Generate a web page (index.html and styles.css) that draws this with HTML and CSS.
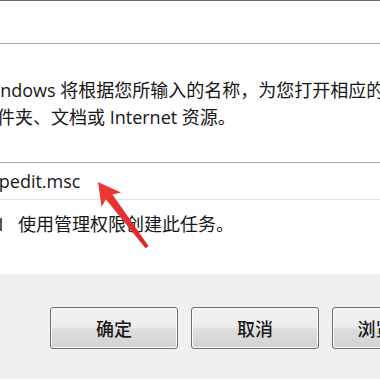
FILE: index.html
```html
<!DOCTYPE html>
<html lang="zh-CN">
<head>
<meta charset="utf-8">
<title>运行</title>
<link rel="stylesheet" href="styles.css">
</head>
<body>
<div class="page">
  <div class="topbar"></div>
  <div class="content">
    <div class="desc">
      <div class="line">Windows 将根据您所输入的名称，为您打开相应的程序、</div>
      <div class="line">文件夹、文档或 Internet 资源。</div>
    </div>
    <div class="field"><span class="field-text">gpedit.msc</span></div>
    <div class="checkrow">
      <span class="checkbox"></span>
      <span class="checklabel">使用管理权限创建此任务。</span>
    </div>
  </div>
  <div class="footer">
    <div class="btn">确定</div>
    <div class="btn">取消</div>
    <div class="btn">浏览(B)...</div>
  </div>
  <svg class="arrow" width="380" height="380" viewBox="0 0 380 380">
    <defs>
      <linearGradient id="ag" x1="0" y1="0" x2="1" y2="1">
        <stop offset="0" stop-color="#ee3b36"/>
        <stop offset="1" stop-color="#d9262a"/>
      </linearGradient>
    </defs>
    <path d="M98 182 L121 192.5 L112.5 194.5 L148.5 246 L145.5 248.3 L105.8 199.2 L101.6 207 Z" fill="url(#ag)"/>
  </svg>
</div>
</body>
</html>
```
FILE: styles.css
```css
html, body {
  margin: 0;
  padding: 0;
  background: #ffffff;
}

.page {
  position: relative;
  width: 380px;
  height: 380px;
  overflow: hidden;
  font-family: "Open Sans", "Noto Sans CJK SC", sans-serif;
  font-size: 18px;
  color: #161616;
}

.topbar {
  height: 42px;
  border-top: 1px solid #666666;
  border-bottom: 1px solid #a6a6a6;
  box-shadow: 0 1px 0 #dcdcdc;
  background: #ffffff;
}

.content {
  padding-top: 33px;
  height: 197px;
  background: #ffffff;
}

.desc {
  margin-left: -21px;
}

.line {
  white-space: nowrap;
  line-height: 27px;
  height: 27px;
}

.field {
  margin-top: 31px;
  margin-left: -40px;
  margin-right: -40px;
  height: 36px;
  padding-left: 28px;
  display: flex;
  align-items: center;
  border-top: 1px solid #a3a6ad;
  border-bottom: 1px solid #e2e4ea;
  border-left: 1px solid #e2e4ea;
  border-right: 1px solid #e2e4ea;
  white-space: nowrap;
}

.field-text {
  line-height: 27px;
}

.checkrow {
  margin-top: 11px;
  display: flex;
  align-items: center;
  height: 27px;
  margin-left: -16px;
  gap: 16px;
}

.checkbox {
  width: 16px;
  height: 12px;
  border-right: 2px solid #555555;
  border-top: 1px solid #777777;
  flex: none;
}

.checklabel {
  white-space: nowrap;
  line-height: 27px;
}

.footer {
  height: 72px;
  padding-top: 33px;
  padding-left: 50px;
  background: #f0f0f0;
  display: flex;
  gap: 13px;
}

.btn {
  flex: none;
  width: 126px;
  height: 40px;
  border: 1px solid #707070;
  border-radius: 3px;
  box-shadow: inset 0 0 0 1px #fbfbfb;
  background: linear-gradient(#f3f3f3 0%, #ececec 48%, #dedede 52%, #d2d2d2 100%);
  display: flex;
  align-items: center;
  justify-content: center;
  font-family: "Noto Sans CJK SC", sans-serif;
  font-weight: 500;
  font-size: 18px;
  color: #1a1a1a;
  white-space: nowrap;
}

.arrow {
  position: absolute;
  left: 0;
  top: 0;
}
```
